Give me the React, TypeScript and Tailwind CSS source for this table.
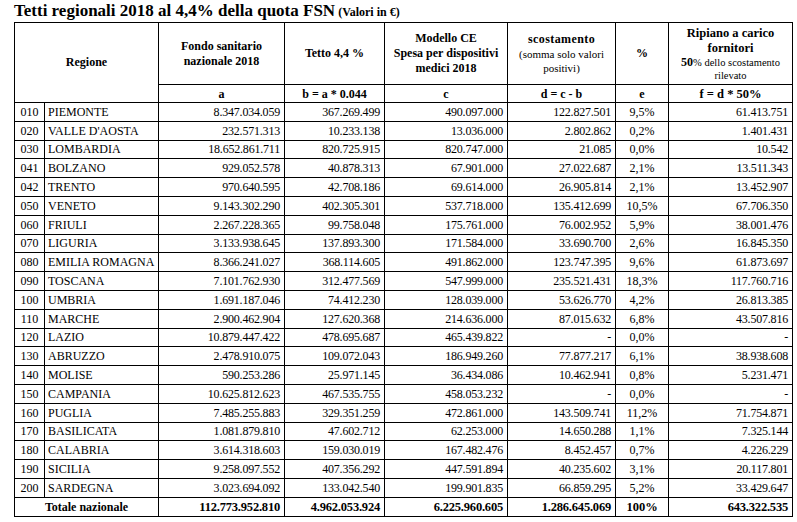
type Row = [string, string, string, string, string, string, string, string];

const rows: Row[] = [
  ['010', 'PIEMONTE', '8.347.034.059', '367.269.499', '490.097.000', '122.827.501', '9,5%', '61.413.751'],
  ['020', "VALLE D'AOSTA", '232.571.313', '10.233.138', '13.036.000', '2.802.862', '0,2%', '1.401.431'],
  ['030', 'LOMBARDIA', '18.652.861.711', '820.725.915', '820.747.000', '21.085', '0,0%', '10.542'],
  ['041', 'BOLZANO', '929.052.578', '40.878.313', '67.901.000', '27.022.687', '2,1%', '13.511.343'],
  ['042', 'TRENTO', '970.640.595', '42.708.186', '69.614.000', '26.905.814', '2,1%', '13.452.907'],
  ['050', 'VENETO', '9.143.302.290', '402.305.301', '537.718.000', '135.412.699', '10,5%', '67.706.350'],
  ['060', 'FRIULI', '2.267.228.365', '99.758.048', '175.761.000', '76.002.952', '5,9%', '38.001.476'],
  ['070', 'LIGURIA', '3.133.938.645', '137.893.300', '171.584.000', '33.690.700', '2,6%', '16.845.350'],
  ['080', 'EMILIA ROMAGNA', '8.366.241.027', '368.114.605', '491.862.000', '123.747.395', '9,6%', '61.873.697'],
  ['090', 'TOSCANA', '7.101.762.930', '312.477.569', '547.999.000', '235.521.431', '18,3%', '117.760.716'],
  ['100', 'UMBRIA', '1.691.187.046', '74.412.230', '128.039.000', '53.626.770', '4,2%', '26.813.385'],
  ['110', 'MARCHE', '2.900.462.904', '127.620.368', '214.636.000', '87.015.632', '6,8%', '43.507.816'],
  ['120', 'LAZIO', '10.879.447.422', '478.695.687', '465.439.822', '-', '0,0%', '-'],
  ['130', 'ABRUZZO', '2.478.910.075', '109.072.043', '186.949.260', '77.877.217', '6,1%', '38.938.608'],
  ['140', 'MOLISE', '590.253.286', '25.971.145', '36.434.086', '10.462.941', '0,8%', '5.231.471'],
  ['150', 'CAMPANIA', '10.625.812.623', '467.535.755', '458.053.232', '-', '0,0%', '-'],
  ['160', 'PUGLIA', '7.485.255.883', '329.351.259', '472.861.000', '143.509.741', '11,2%', '71.754.871'],
  ['170', 'BASILICATA', '1.081.879.810', '47.602.712', '62.253.000', '14.650.288', '1,1%', '7.325.144'],
  ['180', 'CALABRIA', '3.614.318.603', '159.030.019', '167.482.476', '8.452.457', '0,7%', '4.226.229'],
  ['190', 'SICILIA', '9.258.097.552', '407.356.292', '447.591.894', '40.235.602', '3,1%', '20.117.801'],
  ['200', 'SARDEGNA', '3.023.694.092', '133.042.540', '199.901.835', '66.859.295', '5,2%', '33.429.647'],
];

const cell = 'border border-black';
const num = `${cell} text-right pr-[4px] tracking-[-0.2px]`;

export default function App() {
  return (
    <div className="w-[797px] h-[522px] bg-white text-black overflow-hidden font-['Liberation_Serif','Times_New_Roman',serif]">
      {/* Title */}
      <div className="h-[22px] pl-[14px] pt-[1px] leading-[20px] whitespace-nowrap">
        <span className="text-[17px] font-bold">Tetti regionali 2018 al 4,4% della quota FSN</span>
        <span className="text-[12px] font-bold"> (Valori in €)</span>
      </div>

      <table className="ml-[14px] w-[778px] table-fixed border-collapse text-[12px] leading-[14px]">
        <colgroup>
          <col className="w-[30px]" />
          <col className="w-[114px]" />
          <col className="w-[126px]" />
          <col className="w-[100px]" />
          <col className="w-[123px]" />
          <col className="w-[108px]" />
          <col className="w-[53px]" />
          <col className="w-[124px]" />
        </colgroup>
        <thead>
          <tr className="h-[62px] text-[12px] leading-[15px] font-bold text-center">
            <th rowSpan={2} colSpan={2} className={cell}>Regione</th>
            <th className={cell}>Fondo sanitario<br />nazionale 2018</th>
            <th className={cell}>Tetto 4,4 %</th>
            <th className={cell}>Modello CE<br />Spesa per dispositivi<br />medici 2018</th>
            <th className={cell}>
              <div className="tracking-[0.4px]">scostamento</div>
              <div className="text-[11px] font-normal leading-[14px]">(somma solo valori<br />positivi)</div>
            </th>
            <th className={cell}>%</th>
            <th className={cell}>
              <div className="text-[12.5px] leading-[15px]">Ripiano a carico<br />fornitori</div>
              <div className="text-[10.5px] font-normal leading-[13px]">
                <span className="text-[12px] font-bold">50</span>% dello scostamento<br />rilevato
              </div>
            </th>
          </tr>
          <tr className="h-[18px] text-[12px] font-bold text-center">
            <th className={cell}>a</th>
            <th className={cell}>b = a * 0.044</th>
            <th className={cell}>c</th>
            <th className={cell}>d = c - b</th>
            <th className={cell}>e</th>
            <th className={`${cell} text-[12.5px]`}>f = d * 50%</th>
          </tr>
        </thead>
        <tbody>
          {rows.map((r) => (
            <tr key={r[0]} className="h-[18.8px]">
              <td className={`${cell} text-center`}>{r[0]}</td>
              <td className={`${cell} pl-[3px] whitespace-nowrap`}>{r[1]}</td>
              <td className={num}>{r[2]}</td>
              <td className={num}>{r[3]}</td>
              <td className={num}>{r[4]}</td>
              <td className={num}>{r[5]}</td>
              <td className={`${cell} text-center`}>{r[6]}</td>
              <td className={num}>{r[7]}</td>
            </tr>
          ))}
          <tr className="h-[19px] font-bold text-[12.5px]">
            <td colSpan={2} className={`${cell} text-center text-[12px]`}>Totale nazionale</td>
            <td className={num}>112.773.952.810</td>
            <td className={num}>4.962.053.924</td>
            <td className={num}>6.225.960.605</td>
            <td className={num}>1.286.645.069</td>
            <td className={`${cell} text-center`}>100%</td>
            <td className={num}>643.322.535</td>
          </tr>
        </tbody>
      </table>
    </div>
  );
}
